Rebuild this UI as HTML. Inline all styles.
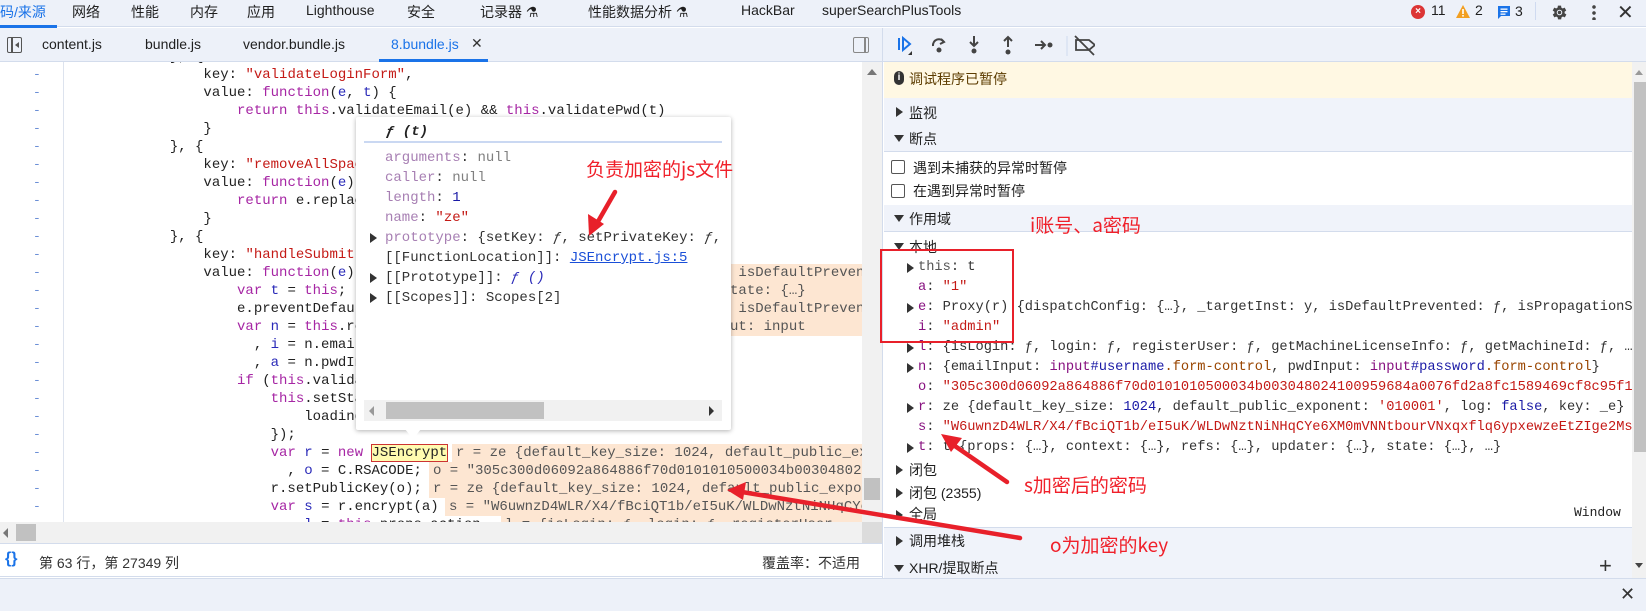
<!DOCTYPE html>
<html><head><meta charset="utf-8"><style>
*{margin:0;padding:0;box-sizing:border-box}
body{width:1646px;height:611px;overflow:hidden;background:#fff;position:relative;font-family:"Liberation Sans","Noto Sans CJK SC",sans-serif;font-size:13px;color:#1f1f1f}
.a{position:absolute;white-space:pre}
.m{font-family:"Liberation Mono","Noto Sans CJK SC",monospace;font-size:14px}
.bar{background:#edf1f9}
.k{color:#a626a4}.s{color:#c41a16}.v{color:#2a2ab8}.p{color:#881280}.g{color:#808080}.n{color:#1a1aa6}
.cl{position:absolute;left:69px;height:18px;line-height:18px;white-space:pre;font-family:"Liberation Mono",monospace;font-size:14px;color:#222}
.dash{position:absolute;left:33px;color:#6b8fd6;font-family:"Liberation Mono",monospace;font-size:13px;line-height:18px}
.iv{position:absolute;height:18px;line-height:18px;background:#fde6d2;white-space:pre;font-family:"Liberation Mono",monospace;font-size:14px;color:#555;padding-left:4px}
.tri{display:block;width:0;height:0;border-top:5px solid transparent;border-bottom:5px solid transparent;border-left:7px solid #333}
.trd{display:block;width:0;height:0;border-left:5px solid transparent;border-right:5px solid transparent;border-top:7px solid #333}
.sh{position:absolute;left:884px;width:748px;background:#f0f3fa}
.row{position:absolute;height:20px;line-height:20px;white-space:pre;font-family:"Liberation Mono",monospace;font-size:13.7px;color:#333}
.ann{position:absolute;color:#f0202a;font-family:"Noto Sans CJK SC",sans-serif;font-size:19px;white-space:pre;line-height:24px}
</style></head><body>

<div class="a bar" style="left:0;top:0;width:1646px;height:27px;border-bottom:1px solid #d3dcec"></div>
<div class="a" style="left:0;top:25px;width:57px;height:3px;background:#1a73e8"></div>
<div class="a" style="left:0;top:2px;font-size:14px;color:#1a73e8">码/来源</div>
<div class="a" style="left:72px;top:2px;font-size:14px">网络</div>
<div class="a" style="left:131px;top:2px;font-size:14px">性能</div>
<div class="a" style="left:190px;top:2px;font-size:14px">内存</div>
<div class="a" style="left:247px;top:2px;font-size:14px">应用</div>
<div class="a" style="left:306px;top:2px;font-size:14px">Lighthouse</div>
<div class="a" style="left:407px;top:2px;font-size:14px">安全</div>
<div class="a" style="left:480px;top:2px;font-size:14px">记录器 ⚗</div>
<div class="a" style="left:588px;top:2px;font-size:14px">性能数据分析 ⚗</div>
<div class="a" style="left:741px;top:2px;font-size:14px">HackBar</div>
<div class="a" style="left:822px;top:2px;font-size:14px">superSearchPlusTools</div>
<div class="a" style="left:1411px;top:5px;width:14px;height:14px;border-radius:7px;background:#dc3535;color:#fff;font-size:10px;line-height:14px;text-align:center;font-weight:bold">×</div>
<div class="a" style="left:1431px;top:2px;font-size:14px">11</div>
<svg class="a" style="left:1455px;top:4px" width="16" height="15"><path d="M8 1 L15 14 L1 14 Z" fill="#f29f21"/><rect x="7.2" y="5" width="1.6" height="5" fill="#fff"/><rect x="7.2" y="11" width="1.6" height="1.6" fill="#fff"/></svg>
<div class="a" style="left:1475px;top:2px;font-size:14px">2</div>
<svg class="a" style="left:1497px;top:5px" width="14" height="15"><path d="M1 1 H13 V11 H4 L1 14 Z" fill="#1a73e8"/><rect x="3.5" y="3.5" width="7" height="1.3" fill="#fff"/><rect x="3.5" y="6" width="7" height="1.3" fill="#fff"/><rect x="3.5" y="8.5" width="5" height="1.3" fill="#fff"/></svg>
<div class="a" style="left:1515px;top:3px;font-size:14px">3</div>
<div class="a" style="left:1535px;top:2px;width:1px;height:18px;background:#cfdaf0"></div>
<svg class="a" style="left:1550px;top:3px" width="19" height="19" viewBox="0 0 24 24"><path fill="#444" d="M19.4 13a7.5 7.5 0 0 0 0-2l2.1-1.6-2-3.5-2.5 1a7 7 0 0 0-1.7-1L15 3.3h-4l-.4 2.6a7 7 0 0 0-1.7 1l-2.5-1-2 3.5L6.6 11a7.5 7.5 0 0 0 0 2l-2.1 1.6 2 3.5 2.5-1a7 7 0 0 0 1.7 1l.4 2.6h4l.4-2.6a7 7 0 0 0 1.7-1l2.5 1 2-3.5zM13 15.5a3.5 3.5 0 1 1 0-7 3.5 3.5 0 0 1 0 7z" transform="translate(-1 0)"/><circle cx="12" cy="12" r="2.2" fill="#444"/></svg>
<div class="a" style="left:1592px;top:4px;width:4px;height:16px;background:radial-gradient(circle,#444 1.6px,transparent 2px) 0 0/4px 6px"></div>
<div class="a" style="left:1617px;top:0;font-size:20px;color:#333">✕</div>

<div class="a bar" style="left:0;top:28px;width:882px;height:34px;border-bottom:1px solid #d3dcec"></div>
<div class="a" style="left:7px;top:37px;width:15px;height:16px;border:1.5px solid #555;border-radius:2px"></div>
<div class="a" style="left:11px;top:37px;width:1.5px;height:16px;background:#555"></div>
<div class="a" style="left:15px;top:42px;border-top:3px solid transparent;border-bottom:3px solid transparent;border-right:4px solid #555"></div>
<div class="a" style="left:42px;top:36px;font-size:14px">content.js</div>
<div class="a" style="left:145px;top:36px;font-size:14px">bundle.js</div>
<div class="a" style="left:243px;top:36px;font-size:14px">vendor.bundle.js</div>
<div class="a" style="left:391px;top:36px;font-size:14px;color:#1a73e8">8.bundle.js</div>
<div class="a" style="left:471px;top:35px;font-size:14px;color:#333">✕</div>
<div class="a" style="left:379px;top:59px;width:109px;height:3px;background:#1a73e8"></div>
<div class="a" style="left:853px;top:37px;width:16px;height:16px;border:1.5px solid #888;border-radius:2px"></div>
<div class="a" style="left:864px;top:37px;width:1.5px;height:16px;background:#888"></div>

<div class="a" style="left:0;top:62px;width:862px;height:460px;overflow:hidden">
 <div class="a" style="left:63px;top:0;width:1px;height:460px;background:#dde3ee"></div>
 <div style="position:absolute;left:0;top:-62px;width:862px;height:600px">
 <div class="dash" style="top:66px">-</div><div class="dash" style="top:84px">-</div><div class="dash" style="top:102px">-</div><div class="dash" style="top:120px">-</div><div class="dash" style="top:138px">-</div><div class="dash" style="top:156px">-</div><div class="dash" style="top:174px">-</div><div class="dash" style="top:192px">-</div><div class="dash" style="top:210px">-</div><div class="dash" style="top:228px">-</div><div class="dash" style="top:246px">-</div><div class="dash" style="top:264px">-</div><div class="dash" style="top:282px">-</div><div class="dash" style="top:300px">-</div><div class="dash" style="top:318px">-</div><div class="dash" style="top:336px">-</div><div class="dash" style="top:354px">-</div><div class="dash" style="top:372px">-</div><div class="dash" style="top:390px">-</div><div class="dash" style="top:408px">-</div><div class="dash" style="top:426px">-</div><div class="dash" style="top:444px">-</div><div class="dash" style="top:462px">-</div><div class="dash" style="top:480px">-</div><div class="dash" style="top:498px">-</div>
 <div class="cl" style="top:48px">            }, {</div>
 <div class="cl" style="top:66px">                key: <span class="s">"validateLoginForm"</span>,</div>
 <div class="cl" style="top:84px">                value: <span class="k">function</span>(<span class="v">e</span>, <span class="v">t</span>) {</div>
 <div class="cl" style="top:102px">                    <span class="k">return</span> <span class="k">this</span>.validateEmail(e) &amp;&amp; <span class="k">this</span>.validatePwd(t)</div>
 <div class="cl" style="top:120px">                }</div>
 <div class="cl" style="top:138px">            }, {</div>
 <div class="cl" style="top:156px">                key: <span class="s">"removeAllSpaces"</span>,</div>
 <div class="cl" style="top:174px">                value: <span class="k">function</span>(<span class="v">e</span>) {</div>
 <div class="cl" style="top:192px">                    <span class="k">return</span> e.replace(/\s/g, "")</div>
 <div class="cl" style="top:210px">                }</div>
 <div class="cl" style="top:228px">            }, {</div>
 <div class="cl" style="top:246px">                key: <span class="s">"handleSubmit"</span>,</div>
 <div class="cl" style="top:264px">                value: <span class="k">function</span>(<span class="v">e</span>) {</div>
 <div class="cl" style="top:282px">                    <span class="k">var</span> <span class="v">t</span> = <span class="k">this</span>;</div>
 <div class="cl" style="top:300px">                    e.preventDefault();</div>
 <div class="cl" style="top:318px">                    <span class="k">var</span> <span class="v">n</span> = <span class="k">this</span>.refs</div>
 <div class="cl" style="top:336px">                      , <span class="v">i</span> = n.emailInput.value</div>
 <div class="cl" style="top:354px">                      , <span class="v">a</span> = n.pwdInput.value;</div>
 <div class="cl" style="top:372px">                    <span class="k">if</span> (<span class="k">this</span>.validateLoginForm(i, a)) {</div>
 <div class="cl" style="top:390px">                        <span class="k">this</span>.setState({</div>
 <div class="cl" style="top:408px">                            loading: !0</div>
 <div class="cl" style="top:426px">                        });</div>
 <div class="cl" style="top:444px">                        <span class="k">var</span> <span class="v">r</span> = <span class="k">new</span> <span style="background:#fffbb0;outline:1px solid #c33">JSEncrypt</span></div>
 <div class="cl" style="top:462px">                          , <span class="v">o</span> = C.RSACODE;</div>
 <div class="cl" style="top:480px">                        r.setPublicKey(o);</div>
 <div class="cl" style="top:498px">                        <span class="k">var</span> <span class="v">s</span> = r.encrypt(a)</div>
 <div class="cl" style="top:516px">                          , <span class="v">l</span> = <span class="k">this</span>.props.action</div>
 <div class="iv" style="left:600px;top:264px;width:270px">_targetInst: y, isDefaultPrevented</div>
 <div class="iv" style="left:600px;top:282px;width:270px">updater: {…}, state: {…}</div>
 <div class="iv" style="left:600px;top:300px;width:270px">_targetInst: y, isDefaultPrevented</div>
 <div class="iv" style="left:600px;top:318px;width:270px">control, pwdInput: input</div>
 <div class="iv" style="left:452px;top:444px;width:420px">r = ze {default_key_size: 1024, default_public_exponent</div>
 <div class="iv" style="left:429px;top:462px;width:440px">o = "305c300d06092a864886f70d0101010500034b003048024</div>
 <div class="iv" style="left:429px;top:480px;width:440px">r = ze {default_key_size: 1024, default_public_exponent</div>
 <div class="iv" style="left:445px;top:498px;width:430px">s = "W6uwnzD4WLR/X4/fBciQT1b/eI5uK/WLDwNztNiNHqCYe</div>
 <div class="iv" style="left:501px;top:516px;width:370px">l = {isLogin: ƒ, login: ƒ, registerUser</div>
 </div>
</div>

<div class="a" style="left:862px;top:62px;width:20px;height:460px;background:#f1f1f1"></div>
<div class="a" style="left:867px;top:69px;border-left:5px solid transparent;border-right:5px solid transparent;border-bottom:6px solid #777"></div>
<div class="a" style="left:864px;top:478px;width:16px;height:22px;background:#c1c1c1"></div>
<div class="a" style="left:0;top:522px;width:862px;height:21px;background:#f1f1f1"></div>
<div class="a" style="left:3px;top:528px;border-top:5px solid transparent;border-bottom:5px solid transparent;border-right:5px solid #777"></div>
<div class="a" style="left:16px;top:524px;width:20px;height:17px;background:#c1c1c1"></div>
<div class="a" style="left:862px;top:522px;width:20px;height:21px;background:#dcdcdc"></div>
<div class="a" style="left:0;top:543px;width:882px;height:34px;background:#fff;border-top:1px solid #d3dcec;border-bottom:1px solid #d3dcec"></div>
<div class="a" style="left:5px;top:550px;font-size:16px;color:#1a73e8;font-weight:bold">{}</div>
<div class="a" style="left:39px;top:553px;font-size:14px;color:#333">第 63 行，第 27349 列</div>
<div class="a" style="left:762px;top:553px;font-size:14px;color:#333">覆盖率：不适用</div>

<div class="a" style="left:356px;top:117px;width:375px;height:313px;background:#fff;box-shadow:0 1px 5px rgba(0,0,0,.3);border-radius:2px"></div>
<div class="a" style="left:405px;top:429px;border-left:8px solid transparent;border-right:8px solid transparent;border-top:10px solid #fff"></div>
<div class="a m" style="left:386px;top:124px;font-weight:bold;font-style:italic;color:#222">ƒ (t)</div>
<div class="a" style="left:364px;top:141px;width:358px;height:1.5px;background:#cad8f2"></div>
<div class="a m" style="left:385px;top:148px;line-height:20px;color:#333"><span style="color:#a77fb3">arguments</span>: <span class="g">null</span>
<span style="color:#a77fb3">caller</span>: <span class="g">null</span>
<span style="color:#a77fb3">length</span>: <span class="n">1</span>
<span style="color:#a77fb3">name</span>: <span class="s">"ze"</span>
<span style="color:#a77fb3">prototype</span>: {setKey: <i>ƒ</i>, setPrivateKey: <i>ƒ</i>,
[[FunctionLocation]]: <span style="color:#1a4fd8;text-decoration:underline">JSEncrypt.js:5</span>
[[Prototype]]: <i class="v">ƒ ()</i>
[[Scopes]]: Scopes[2]</div>
<div class="a" style="left:370px;top:233px"><span class="tri"></span></div>
<div class="a" style="left:370px;top:273px"><span class="tri"></span></div>
<div class="a" style="left:370px;top:293px"><span class="tri"></span></div>
<div class="a" style="left:364px;top:400px;width:358px;height:21px;background:#f1f1f1"></div>
<div class="a" style="left:386px;top:402px;width:158px;height:17px;background:#c1c1c1"></div>
<div class="a" style="left:369px;top:406px;border-top:5px solid transparent;border-bottom:5px solid transparent;border-right:5px solid #999"></div>
<div class="a" style="left:709px;top:406px;border-top:5px solid transparent;border-bottom:5px solid transparent;border-left:5px solid #333"></div>

<div class="a" style="left:882px;top:28px;width:1px;height:550px;background:#d3dcec"></div>
<div class="a bar" style="left:883px;top:28px;width:763px;height:34px;border-bottom:1px solid #d3dcec"></div>
<svg class="a" style="left:895px;top:34px" width="200" height="24">
 <g fill="none" stroke="#1a73e8" stroke-width="2"><line x1="4" y1="4" x2="4" y2="16"/><path d="M8 4 L15 10 L8 16 Z"/></g><path d="M13 21 L17 17 L17 21 Z" fill="#333"/>
 <g fill="none" stroke="#444" stroke-width="2"><path d="M38 12 A6 6 0 0 1 49 8"/><path d="M46 5 L49 8 L45 10"/></g><circle cx="44" cy="16" r="2.5" fill="#444"/>
 <g stroke="#444" stroke-width="2" fill="none"><line x1="79" y1="2" x2="79" y2="12"/><path d="M75 8 L79 12 L83 8"/></g><circle cx="79" cy="17" r="2.5" fill="#444"/>
 <g stroke="#444" stroke-width="2" fill="none"><line x1="113" y1="3" x2="113" y2="13"/><path d="M109 7 L113 3 L117 7"/></g><circle cx="113" cy="18" r="2.5" fill="#444"/>
 <g stroke="#444" stroke-width="2" fill="none"><line x1="140" y1="11" x2="150" y2="11"/><path d="M146 7 L150 11 L146 15"/></g><circle cx="155" cy="11" r="2.5" fill="#444"/>
 <line x1="172" y1="2" x2="172" y2="22" stroke="#cfdaf0"/>
 <g stroke="#444" stroke-width="1.8" fill="none"><path d="M181 6 H194 L200 11 L194 16 H181 Z"/><line x1="180" y1="2" x2="199" y2="21"/></g>
</svg>
<div class="a" style="left:884px;top:62px;width:748px;height:36px;background:#fff8e3"></div>
<div class="a" style="left:894px;top:71px;width:10px;height:14px;border-radius:5px;background:#333;color:#fff;font-size:10px;line-height:14px;text-align:center;font-weight:bold">i</div>
<div class="a" style="left:909px;top:69px;font-size:14px;color:#5c3c00">调试程序已暂停</div>
<div class="sh" style="top:98px;height:54px;border-bottom:1px solid #d3dcec"></div>
<div class="a" style="left:896px;top:107px"><span class="tri"></span></div>
<div class="a" style="left:909px;top:103px;font-size:14px">监视</div>
<div class="a" style="left:894px;top:135px"><span class="trd"></span></div>
<div class="a" style="left:909px;top:129px;font-size:14px">断点</div>
<div class="a" style="left:891px;top:160px;width:14px;height:14px;border:1px solid #555;border-radius:2px;background:#fff"></div>
<div class="a" style="left:913px;top:158px;font-size:14px">遇到未捕获的异常时暂停</div>
<div class="a" style="left:891px;top:184px;width:14px;height:14px;border:1px solid #555;border-radius:2px;background:#fff"></div>
<div class="a" style="left:913px;top:181px;font-size:14px">在遇到异常时暂停</div>
<div class="sh" style="top:205px;height:27px;border-bottom:1px solid #d3dcec"></div>
<div class="a" style="left:894px;top:215px"><span class="trd"></span></div>
<div class="a" style="left:909px;top:209px;font-size:14px">作用域</div>
<div class="a" style="left:894px;top:243px"><span class="trd"></span></div>
<div class="a" style="left:909px;top:237px;font-size:14px">本地</div>

<div class="a" style="left:907px;top:263px"><span class="tri"></span></div>
<div class="row" style="left:918px;top:258px"><span style="color:#555">this</span>: t</div>
<div class="row" style="left:918px;top:278px"><span class="p">a</span>: <span class="s">"1"</span></div>
<div class="a" style="left:907px;top:303px"><span class="tri"></span></div>
<div class="row" style="left:918px;top:298px"><span class="p">e</span>: Proxy(r) {dispatchConfig: {…}, _targetInst: y, isDefaultPrevented: ƒ, isPropagationS</div>
<div class="row" style="left:918px;top:318px"><span class="p">i</span>: <span class="s">"admin"</span></div>
<div class="a" style="left:907px;top:343px"><span class="tri"></span></div>
<div class="row" style="left:918px;top:338px"><span class="p">l</span>: {isLogin: ƒ, login: ƒ, registerUser: ƒ, getMachineLicenseInfo: ƒ, getMachineId: ƒ, …</div>
<div class="a" style="left:907px;top:363px"><span class="tri"></span></div>
<div class="row" style="left:918px;top:358px"><span class="p">n</span>: {emailInput: <span class="p">input</span><span class="n">#username</span><span style="color:#994500">.form-control</span>, pwdInput: <span class="p">input</span><span class="n">#password</span><span style="color:#994500">.form-control</span>}</div>
<div class="row" style="left:918px;top:378px"><span class="p">o</span>: <span class="s">"305c300d06092a864886f70d0101010500034b003048024100959684a0076fd2a8fc1589469cf8c95f1</span></div>
<div class="a" style="left:907px;top:403px"><span class="tri"></span></div>
<div class="row" style="left:918px;top:398px"><span class="p">r</span>: ze {default_key_size: <span class="n">1024</span>, default_public_exponent: <span class="s">'010001'</span>, log: <span class="n">false</span>, key: _e}</div>
<div class="row" style="left:918px;top:418px"><span class="p">s</span>: <span class="s">"W6uwnzD4WLR/X4/fBciQT1b/eI5uK/WLDwNztNiNHqCYe6XM0mVNNtbourVNxqxflq6ypxewzeEtZIge2Ms</span></div>
<div class="a" style="left:907px;top:443px"><span class="tri"></span></div>
<div class="row" style="left:918px;top:438px"><span class="p">t</span>: t {props: {…}, context: {…}, refs: {…}, updater: {…}, state: {…}, …}</div>
<div class="a" style="left:896px;top:465px"><span class="tri"></span></div>
<div class="a" style="left:909px;top:460px;font-size:14px">闭包</div>
<div class="a" style="left:896px;top:488px"><span class="tri"></span></div>
<div class="a" style="left:909px;top:483px;font-size:14px">闭包 (2355)</div>
<div class="a" style="left:896px;top:510px"><span class="tri"></span></div>
<div class="a" style="left:909px;top:504px;font-size:14px">全局</div>
<div class="a m" style="left:1574px;top:505px;font-size:13px">Window</div>
<div class="sh" style="top:527px;height:51px;border-top:1px solid #d3dcec"></div>
<div class="a" style="left:896px;top:536px"><span class="tri"></span></div>
<div class="a" style="left:909px;top:531px;font-size:14px">调用堆栈</div>
<div class="a" style="left:894px;top:565px"><span class="trd"></span></div>
<div class="a" style="left:909px;top:558px;font-size:14px">XHR/提取断点</div>
<div class="a" style="left:1599px;top:553px;font-size:22px;color:#333">+</div>
<div class="a" style="left:1632px;top:62px;width:14px;height:516px;background:#f1f1f1"></div>
<div class="a" style="left:1635px;top:70px;border-left:4px solid transparent;border-right:4px solid transparent;border-bottom:5px solid #999"></div>
<div class="a" style="left:1634px;top:82px;width:12px;height:370px;background:#c1c1c1"></div>
<div class="a" style="left:1635px;top:563px;border-left:4px solid transparent;border-right:4px solid transparent;border-top:5px solid #444"></div>
<div class="a" style="left:0;top:578px;width:1646px;height:33px;background:#edf1f9;border-top:1px solid #d3dcec"></div>
<div class="a" style="left:1620px;top:584px;font-size:18px;color:#333">✕</div>

<div class="a" style="left:880px;top:249px;width:134px;height:94px;border:2px solid #e8202a"></div>
<div class="ann" style="left:586px;top:157px">负责加密的js文件</div>
<div class="ann" style="left:1030px;top:213px">i账号、a密码</div>
<div class="ann" style="left:1024px;top:473px">s加密后的密码</div>
<div class="ann" style="left:1050px;top:533px">o为加密的key</div>
<svg class="a" style="left:0;top:0" width="1646" height="611">
 <g stroke="#e8202a" stroke-width="4.5" stroke-linecap="round" fill="#e8202a">
  <line x1="615" y1="192" x2="596" y2="225"/>
  <line x1="1007" y1="482" x2="952" y2="444"/>
  <line x1="1020" y1="538" x2="742" y2="492"/>
 </g>
 <g fill="#e8202a">
  <path d="M589 236 L588 214 L604 224 Z"/>
  <path d="M941 434 L962 438 L951 452 Z"/>
  <path d="M727 490 L746 482 L743 500 Z"/>
 </g>
</svg>
</body></html>
